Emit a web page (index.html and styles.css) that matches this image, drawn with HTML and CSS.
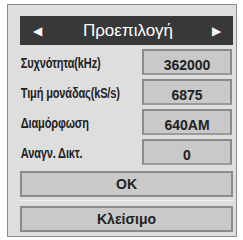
FILE: index.html
```html
<!DOCTYPE html>
<html lang="el">

<head>
    <meta charset="UTF-8">
    <title>Προεπιλογή</title>
    <link rel="stylesheet" href="styles.css">
</head>

<body>

    <div class="panel">
        <div class="header">
            <span class="arrow">&#9664;</span>
            <span class="title">Προεπιλογή</span>
            <span class="arrow">&#9654;</span>
        </div>

        <div class="row">
            <span class="label">Συχνότητα(kHz)</span>
            <span class="value">362000</span>
        </div>
        <div class="row">
            <span class="label">Τιμή μονάδας(kS/s)</span>
            <span class="value">6875</span>
        </div>
        <div class="row">
            <span class="label">Διαμόρφωση</span>
            <span class="value">640AM</span>
        </div>
        <div class="row">
            <span class="label">Αναγν. Δικτ.</span>
            <span class="value">0</span>
        </div>

        <button class="btn ok">OK</button>
        <div class="sep"></div>
        <button class="btn">Κλείσιμο</button>
    </div>

</body>

</html>
```

FILE: styles.css
```css
* {
    margin: 0;
    padding: 0;
    box-sizing: border-box;
}

body {
    font-family: 'Liberation Sans', Arial, sans-serif;
    background: #fff;
    color: #222;
}

.panel {
    margin: 4px 0 0 7px;
    width: 230px;
    height: 233px;
    border: 1px solid #8c8c8c;
    background: #dedede;
    padding: 11px 3px 0 12px;
}

.header {
    height: 29px;
    background: #383838;
    color: #fff;
    display: flex;
    align-items: center;
    padding: 0 10px 0 13px;
}

.header .title {
    flex: 1;
    text-align: center;
    font-size: 17px;
    padding-top: 1px;
}

.header .arrow {
    font-size: 12px;
    color: #f4f4f4;
    width: 11px;
}

.row {
    display: flex;
    align-items: center;
    height: 26px;
    margin-top: 4px;
    padding-right: 1px;
}

.label {
    flex: 1;
    min-width: 0;
    font-size: 14.5px;
    font-weight: bold;
    letter-spacing: -0.2px;
    padding: 2px 0 0 1px;
    transform: scaleX(0.76);
    transform-origin: left center;
    white-space: nowrap;
}

.value {
    flex: none;
    width: 90px;
    height: 100%;
    background: #c9c9c9;
    border: 2px solid #8a8a8a;
    border-bottom-color: #9a9a9a;
    display: flex;
    align-items: center;
    justify-content: center;
    font-size: 14px;
    font-weight: bold;
    padding-top: 6px;
}

.btn {
    display: block;
    width: 213px;
    height: 26px;
    background: #c9c9c9;
    border: 2px solid #8a8a8a;
    font-family: inherit;
    font-size: 14px;
    font-weight: bold;
    color: #222;
}

.ok {
    margin-top: 6px;
}

.sep {
    height: 1px;
    margin: 3px 0 5px;
    background: #f2f2f2;
}
```
